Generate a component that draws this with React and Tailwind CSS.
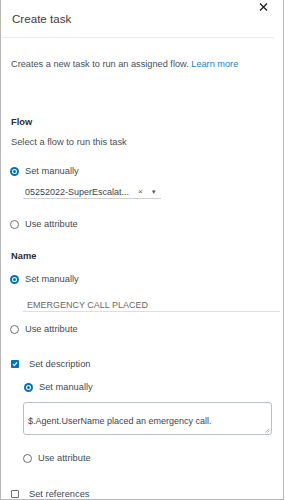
import React from "react";

const font = { fontFamily: '"Liberation Sans", Arial, sans-serif' };

function Radio({ checked }) {
  return checked ? (
    <div className="w-[9px] h-[9px] rounded-full bg-[#0073bb] flex items-center justify-center shrink-0">
      <div className="w-[5px] h-[5px] rounded-full bg-white flex items-center justify-center">
        <div className="w-[3px] h-[3px] rounded-full bg-[#0073bb]" />
      </div>
    </div>
  ) : (
    <div className="w-[9px] h-[9px] rounded-full border border-[#6f6f6f] bg-white shrink-0" />
  );
}

function Check({ checked }) {
  return checked ? (
    <div className="w-[8px] h-[8px] rounded-[1px] bg-[#0073bb] flex items-center justify-center shrink-0">
      <svg width="6" height="6" viewBox="0 0 6 6">
        <path d="M1 3.2 L2.4 4.6 L5 1.4" stroke="white" strokeWidth="1.2" fill="none" />
      </svg>
    </div>
  ) : (
    <div className="w-[8px] h-[8px] rounded-[1px] border border-[#6f6f6f] bg-white shrink-0" />
  );
}

function RadioRow({ checked, label, className = "", gap = "gap-[6px]" }) {
  return (
    <div className={`flex items-center h-[12px] ${gap} ${className}`}>
      <Radio checked={checked} />
      <span className="text-[9.3px] leading-[12px] text-[#444b55]">{label}</span>
    </div>
  );
}

export default function App() {
  return (
    <div className="w-[285px] h-[500px] bg-white overflow-hidden" style={font}>
      <div className="relative w-[284px] h-[500px] border-l border-r border-b border-[#b8b8b8] bg-white">
        <svg className="absolute left-[258px] top-[3px]" width="9" height="8" viewBox="0 0 9 8">
          <path d="M1 0.5 L8 7.5 M8 0.5 L1 7.5" stroke="#222" strokeWidth="1.4" />
        </svg>
        <div className="h-[38px] mr-[9px] ml-[1px] border-b border-[#ececec] pl-[10px] pt-[6px]">
          <span className="text-[11.6px] leading-[16px] text-[#3d3d3d]">Create task</span>
        </div>
        <div className="pl-[10px] flex flex-col">
          <div className="mt-[20px] h-[12px] text-[9.2px] leading-[12px] text-[#4a4f57]">
            Creates a new task to run an assigned flow. <span className="text-[#1c7fc4]">Learn more</span>
          </div>

          <div className="mt-[46px] h-[12px] text-[9.3px] leading-[12px] font-bold text-[#2a2e33]">Flow</div>
          <div className="mt-[8px] h-[12px] text-[9.3px] leading-[12px] text-[#4a4f57]">Select a flow to run this task</div>
          <RadioRow className="mt-[17px] ml-[-1px]" checked label="Set manually" gap="gap-[6px]" />
          <div className="mt-[9px] ml-[12px] w-[138px] h-[13px] border-b border-[#cfcfcf] flex items-center">
            <span className="ml-[2px] text-[9px] leading-[12px] text-[#3f444b]">05252022-SuperEscalat...</span>
            <span className="ml-[9px] text-[8px] leading-[12px] text-[#555]">×</span>
            <span className="ml-[8px] text-[6px] leading-[12px] text-[#555]">▼</span>
          </div>
          <RadioRow className="mt-[19px] ml-[-1px]" label="Use attribute" />

          <div className="mt-[20px] h-[12px] text-[9.3px] leading-[12px] font-bold text-[#2a2e33]">Name</div>
          <RadioRow className="mt-[11px] ml-[-1px]" checked label="Set manually" />
          <div className="mt-[14px] ml-[12px] w-[257px] h-[13px] border-b border-[#dedede] flex items-center">
            <span className="ml-[4px] text-[9px] leading-[12px] text-[#6a6a6a]">EMERGENCY CALL PLACED</span>
          </div>
          <RadioRow className="mt-[11px] ml-[-1px]" label="Use attribute" />

          <div className="mt-[23px] h-[12px] flex items-center gap-[10px]">
            <Check checked />
            <span className="text-[9.3px] leading-[12px] text-[#444b55]">Set description</span>
          </div>
          <RadioRow className="mt-[11px] ml-[13px]" checked label="Set manually" />
          <div className="relative mt-[9px] ml-[12px] w-[249px] h-[33px] border border-[#b9c0c4] rounded-[3px] px-[4px] pt-[4px]">
            <span className="text-[9px] leading-[12px] text-[#3f444b]">$.Agent.UserName placed an emergency call.</span>
            <svg className="absolute right-[1px] bottom-[1px]" width="5" height="5" viewBox="0 0 5 5">
              <path d="M4.5 0.5 L0.5 4.5 M4.5 2.5 L2.5 4.5" stroke="#999" strokeWidth="0.7" />
            </svg>
          </div>
          <RadioRow className="mt-[17px] ml-[12px]" label="Use attribute" />

          <div className="mt-[24px] h-[12px] flex items-center gap-[10px]">
            <Check />
            <span className="text-[9.3px] leading-[12px] text-[#444b55]">Set references</span>
          </div>
        </div>
      </div>
    </div>
  );
}
